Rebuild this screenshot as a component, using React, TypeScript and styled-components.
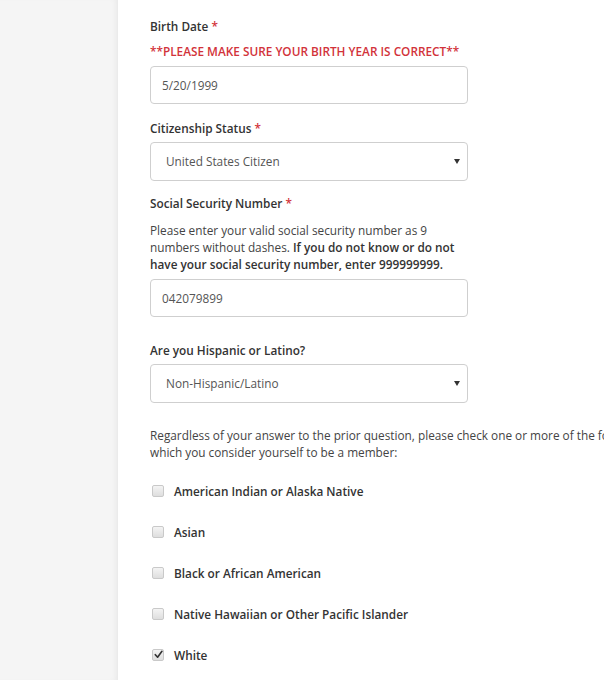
import React from "react";
import styled, { createGlobalStyle } from "styled-components";

const Global = createGlobalStyle`
  html, body { margin: 0; padding: 0; background: #fff; }
  body { font-family: "Open Sans", "Liberation Sans", sans-serif; overflow: hidden; }
  * { box-sizing: border-box; }
`;

const Page = styled.div`
  display: flex;
  width: 604px;
  height: 680px;
  overflow: hidden;
`;

const SidePanel = styled.div`
  flex: 0 0 118px;
  background: #f5f5f5;
  box-shadow: inset -5px 0 6px -4px rgba(0, 0, 0, 0.07);
`;

const Content = styled.div`
  flex: 0 0 auto;
  padding: 18px 0 0 32px;
  display: flex;
  flex-direction: column;
  font-size: 11.8px;
  line-height: 17px;
  color: #333;
`;

const Label = styled.div<{ $mb?: number; $mt?: number }>`
  font-weight: 600;
  color: #333;
  margin-top: ${(p) => p.$mt ?? 0}px;
  margin-bottom: ${(p) => p.$mb ?? 5}px;
`;

const Req = styled.span`
  color: #d2323a;
`;

const Warning = styled.div`
  color: #d2323a;
  font-weight: 600;
  margin-bottom: 6px;
`;

const TextBox = styled.div`
  width: 318px;
  height: 38px;
  border: 1px solid #cfcfcf;
  border-radius: 4px;
  padding: 0 11px;
  display: flex;
  align-items: center;
  color: #555;
  font-size: 11.8px;
`;

const SelectBox = styled(TextBox)`
  height: 39px;
  padding: 0 7px 0 15px;
  justify-content: space-between;
`;

const Caret = styled.span`
  width: 0;
  height: 0;
  border-left: 3px solid transparent;
  border-right: 3px solid transparent;
  border-top: 5px solid #333;
`;

const Help = styled.p<{ $mb: number; $mt: number }>`
  margin: ${(p) => p.$mt}px 0 ${(p) => p.$mb}px;
  color: #444;
  white-space: nowrap;
  strong { font-weight: 600; color: #333; }
`;

const Spacer = styled.div<{ $h: number }>`
  height: ${(p) => p.$h}px;
`;

const CheckList = styled.div`
  display: flex;
  flex-direction: column;
  gap: 24px;
`;

const CheckRow = styled.label`
  display: flex;
  align-items: center;
  gap: 10px;
  font-weight: 600;
  color: #333;
  height: 17px;
  padding-left: 2px;
`;

const Box = styled.span`
  width: 12px;
  height: 12px;
  border: 1px solid #c9c9c9;
  border-radius: 2px;
  background: linear-gradient(#f4f4f4, #dedede);
  display: flex;
  align-items: center;
  justify-content: center;
  margin-top: -2px;
`;

const options = [
  { label: "American Indian or Alaska Native", checked: false },
  { label: "Asian", checked: false },
  { label: "Black or African American", checked: false },
  { label: "Native Hawaiian or Other Pacific Islander", checked: false },
  { label: "White", checked: true },
];

export default function App() {
  return (
    <>
      <Global />
      <Page>
        <SidePanel />
        <Content>
          <Label $mb={8}>
            Birth Date <Req>*</Req>
          </Label>
          <Warning>**PLEASE MAKE SURE YOUR BIRTH YEAR IS CORRECT**</Warning>
          <TextBox>5/20/1999</TextBox>

          <Label $mt={16} $mb={5}>
            Citizenship Status <Req>*</Req>
          </Label>
          <SelectBox>
            United States Citizen
            <Caret />
          </SelectBox>

          <Label $mt={14} $mb={0}>
            Social Security Number <Req>*</Req>
          </Label>
          <Help $mt={10} $mb={6}>
            Please enter your valid social security number as 9
            <br />
            numbers without dashes. <strong>If you do not know or do not</strong>
            <br />
            <strong>have your social security number, enter 999999999.</strong>
          </Help>
          <TextBox>042079899</TextBox>

          <Label $mt={25} $mb={5}>
            Are you Hispanic or Latino?
          </Label>
          <SelectBox>
            Non-Hispanic/Latino
            <Caret />
          </SelectBox>

          <Help $mt={24} $mb={0}>
            Regardless of your answer to the prior question, please check one or more of the following groups in
            <br />
            which you consider yourself to be a member:
          </Help>
          <Spacer $h={22} />
          <CheckList>
            {options.map((o) => (
              <CheckRow key={o.label}>
                <Box>
                  {o.checked && (
                    <svg width="9" height="9" viewBox="0 0 10 10">
                      <path d="M1.5 5.2 L4 8 L8.8 1.5" fill="none" stroke="#333" strokeWidth="1.8" strokeLinecap="round" strokeLinejoin="round" />
                    </svg>
                  )}
                </Box>
                {o.label}
              </CheckRow>
            ))}
          </CheckList>
        </Content>
      </Page>
    </>
  );
}
